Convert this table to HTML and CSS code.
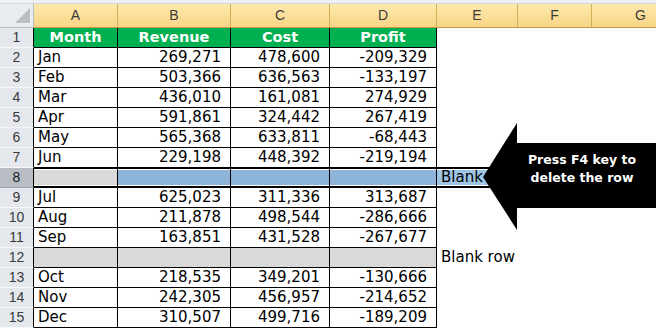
FILE: index.html
```html
<!DOCTYPE html>
<html lang="en">
<head>
    <meta charset="UTF-8">
    <title>Delete blank rows</title>
    <link rel="stylesheet" href="styles.css">
</head>
<body>
<div class="sheet">
    <div class="topbar"></div>
    <table class="grid">
        <colgroup>
            <col class="w-rh"><col class="w-a"><col class="w-b"><col class="w-c">
            <col class="w-d"><col class="w-e"><col class="w-f"><col class="w-g">
        </colgroup>
        <tr class="colhead">
            <td class="corner">
                <svg class="corner-mark" width="16" height="16" viewBox="0 0 16 16"><polygon points="15,0 15,15 0,15" fill="#bcbec2"/></svg>
            </td>
            <td>A</td><td>B</td><td>C</td><td>D</td><td>E</td><td>F</td><td>G</td>
        </tr>
        <tr class="head">
            <td class="rh">1</td>
            <td class="t">Month</td><td class="t">Revenue</td><td class="t">Cost</td><td class="t">Profit</td>
            <td></td><td></td><td></td>
        </tr>
        <tr>
            <td class="rh">2</td>
            <td class="t">Jan</td><td class="t n">269,271</td><td class="t n">478,600</td><td class="t n">-209,329</td>
            <td></td><td></td><td></td>
        </tr>
        <tr>
            <td class="rh">3</td>
            <td class="t">Feb</td><td class="t n">503,366</td><td class="t n">636,563</td><td class="t n">-133,197</td>
            <td></td><td></td><td></td>
        </tr>
        <tr>
            <td class="rh">4</td>
            <td class="t">Mar</td><td class="t n">436,010</td><td class="t n">161,081</td><td class="t n">274,929</td>
            <td></td><td></td><td></td>
        </tr>
        <tr>
            <td class="rh">5</td>
            <td class="t">Apr</td><td class="t n">591,861</td><td class="t n">324,442</td><td class="t n">267,419</td>
            <td></td><td></td><td></td>
        </tr>
        <tr>
            <td class="rh">6</td>
            <td class="t">May</td><td class="t n">565,368</td><td class="t n">633,811</td><td class="t n">-68,443</td>
            <td></td><td></td><td></td>
        </tr>
        <tr class="above-sel">
            <td class="rh">7</td>
            <td class="t">Jun</td><td class="t n">229,198</td><td class="t n">448,392</td><td class="t n">-219,194</td>
            <td></td><td></td><td></td>
        </tr>
        <tr class="sel">
            <td class="rh">8</td>
            <td class="t blank active"></td><td class="t"></td><td class="t"></td><td class="t"></td>
            <td class="note">Blank row</td><td></td><td></td>
        </tr>
        <tr>
            <td class="rh">9</td>
            <td class="t">Jul</td><td class="t n">625,023</td><td class="t n">311,336</td><td class="t n">313,687</td>
            <td></td><td></td><td></td>
        </tr>
        <tr>
            <td class="rh">10</td>
            <td class="t">Aug</td><td class="t n">211,878</td><td class="t n">498,544</td><td class="t n">-286,666</td>
            <td></td><td></td><td></td>
        </tr>
        <tr>
            <td class="rh">11</td>
            <td class="t">Sep</td><td class="t n">163,851</td><td class="t n">431,528</td><td class="t n">-267,677</td>
            <td></td><td></td><td></td>
        </tr>
        <tr>
            <td class="rh">12</td>
            <td class="t blank"></td><td class="t blank"></td><td class="t blank"></td><td class="t blank"></td>
            <td class="note">Blank row</td><td></td><td></td>
        </tr>
        <tr>
            <td class="rh">13</td>
            <td class="t">Oct</td><td class="t n">218,535</td><td class="t n">349,201</td><td class="t n">-130,666</td>
            <td></td><td></td><td></td>
        </tr>
        <tr>
            <td class="rh">14</td>
            <td class="t">Nov</td><td class="t n">242,305</td><td class="t n">456,957</td><td class="t n">-214,652</td>
            <td></td><td></td><td></td>
        </tr>
        <tr>
            <td class="rh">15</td>
            <td class="t">Dec</td><td class="t n">310,507</td><td class="t n">499,716</td><td class="t n">-189,209</td>
            <td></td><td></td><td></td>
        </tr>
    </table>

    <!-- callout arrow over the sheet -->
    <div class="callout">
        <svg class="callout-shape" width="173" height="108" viewBox="0 0 173 108">
            <polygon points="0,54 34,0 34,20 173,20 173,85 34,85 34,107" fill="#000"/>
        </svg>
        <div class="callout-text">Press F4 key to<br>delete the row</div>
    </div>
</div>
</body>
</html>
```

FILE: styles.css
```css
body {
    margin: 0;
    background: #fff;
    font-family: "DejaVu Sans", Verdana, sans-serif;
    color: #000;
    overflow: hidden;
}

.sheet {
    position: relative;
    width: 656px;
    height: 328px;
    overflow: hidden;
}

.topbar {
    height: 3px;
    background: #eef0f3;
    border-bottom: 1px solid #d3d7dc;
}

.grid {
    table-layout: fixed;
    border-collapse: separate;
    border-spacing: 0;
    width: 690px;
    font-size: 15px;
}

.w-rh { width: 34px; }
.w-a { width: 84px; }
.w-b { width: 113px; }
.w-c { width: 99px; }
.w-d { width: 107px; }
.w-e { width: 81px; }
.w-f { width: 74px; }
.w-g { width: 98px; }

.grid td {
    padding: 0 0 0 4px;
    line-height: 19px;
    border-right: 1px solid transparent;
    border-bottom: 1px solid transparent;
    white-space: nowrap;
    overflow: hidden;
    vertical-align: bottom;
}

.grid tr {
    height: 20px;
}

/* column letters */
.colhead {
    height: 24px;
}

.colhead td {
    font-family: "Liberation Sans", Arial, sans-serif;
    font-size: 14px;
    color: #3a3a3a;
    text-align: center;
    padding: 0;
    line-height: 23px;
    vertical-align: middle;
    background: linear-gradient(#fde9ad, #f8d586);
    border-right-color: #d7ac57;
    border-bottom-color: #c49645;
}

.colhead td.corner {
    background: #e9ecf0;
    border-right-color: #b7bec7;
    border-bottom-color: #b7bec7;
    vertical-align: bottom;
}

.corner-mark {
    display: block;
    margin: 0 2px 3px auto;
}

/* row numbers */
.grid td.rh {
    font-family: "Liberation Sans", Arial, sans-serif;
    font-size: 14px;
    color: #3a3a3a;
    text-align: center;
    padding: 0;
    background: #e4e8ed;
    border-right-color: #000;
    border-bottom-color: #f5f7f9;
}

.grid td.t {
    border-right-color: #000;
    border-bottom-color: #000;
}

.grid td.n {
    text-align: right;
    padding: 0 9px 0 0;
}

.head td.t {
    background: #00b050;
    color: #fff;
    font-weight: bold;
    font-size: 14.5px;
    text-align: center;
    padding: 0;
}

.grid td.blank {
    background: #d9d9d9;
}

.grid td.note {
    padding-left: 4px;
}

/* selected row 8 */
.above-sel td {
    border-bottom-color: #000;
}

.above-sel td.rh {
    border-bottom-color: #f5f7f9;
}

.sel td {
    background: #8db4d9;
    border-bottom-color: #000;
    box-shadow: inset 0 1px #000, inset 0 2px #fff, inset 0 -1px #000, inset 0 -2px #fff;
}

.sel td.note {
    background: #9ec4e6;
}

.sel td.active {
    background: #d9d9d9;
}

.grid .sel td.rh {
    background: #b9bec5;
    color: #222;
    box-shadow: none;
    border-bottom-color: #9aa1aa;
}

/* callout */
.callout {
    position: absolute;
    left: 483px;
    top: 123px;
    width: 173px;
    height: 108px;
}

.callout-shape {
    display: block;
}

.callout-text {
    position: absolute;
    left: 34px;
    top: 28px;
    width: 130px;
    color: #fff;
    font-weight: bold;
    font-size: 12.5px;
    line-height: 18px;
    text-align: center;
}
```
